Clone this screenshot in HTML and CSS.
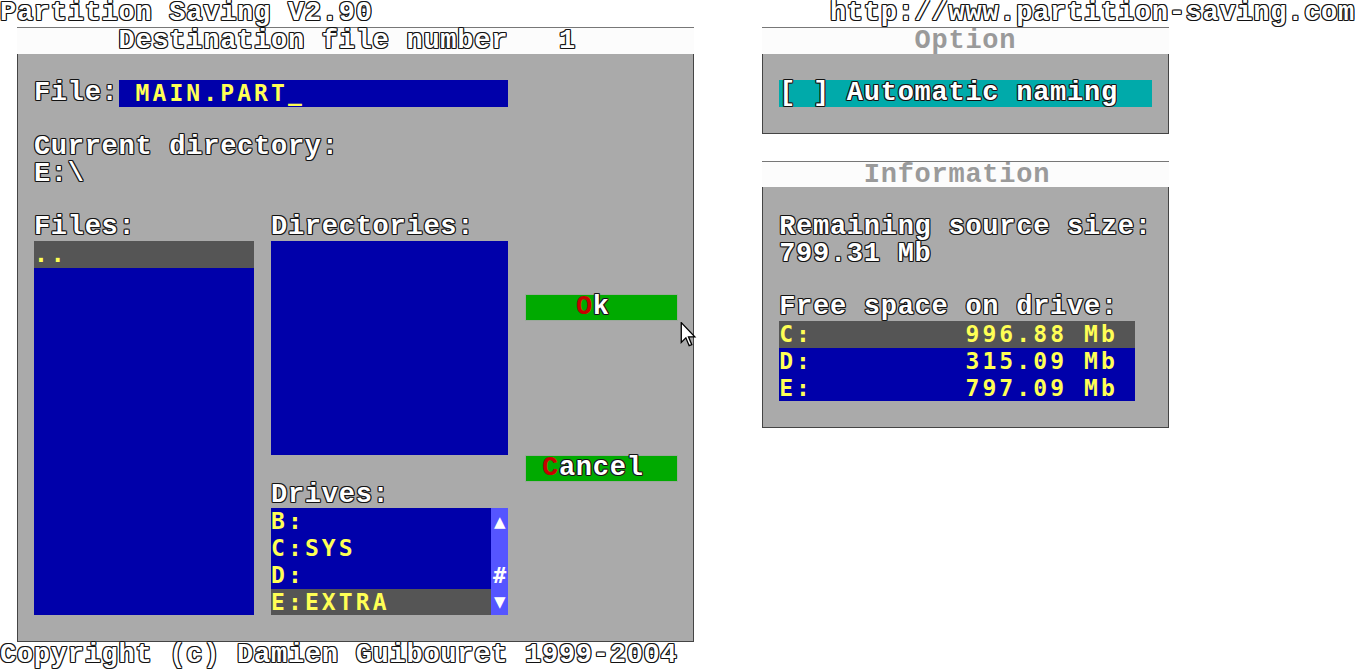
FILE: index.html
```html
<!DOCTYPE html>
<html>
<head>
<meta charset="utf-8">
<title>Partition Saving</title>
<link rel="stylesheet" href="styles.css">
</head>
<body>
<div class="screen">
  <div class="hdr-left t-out">Partition Saving V2.90</div>
  <div class="hdr-right t-out">http://www.partition-saving.com</div>

  <section class="win dialog">
    <div class="title t-out">Destination file number   1</div>
    <div class="file-lbl t-out">File:</div>
    <div class="input t-yel">MAIN.PART_</div>
    <div class="cur-lbl t-out">Current directory:</div>
    <div class="cur-val t-out">E:\</div>
    <div class="files-lbl t-out">Files:</div>
    <div class="dirs-lbl t-out">Directories:</div>
    <div class="list files">
      <div class="item sel t-yel">..</div>
    </div>
    <div class="list dirs"></div>
    <div class="drives-lbl t-out">Drives:</div>
    <div class="drives">
      <div class="drive-items">
        <div class="item t-yel">B:</div>
        <div class="item t-yel">C:SYS</div>
        <div class="item t-yel">D:</div>
        <div class="item sel t-yel">E:EXTRA</div>
      </div>
      <div class="scroll">
        <div class="sc-cell arrow">▲</div>
        <div class="sc-cell"></div>
        <div class="sc-cell hash">#</div>
        <div class="sc-cell arrow">▼</div>
      </div>
    </div>
    <div class="btn ok t-out">   <span class="hot">O</span>k</div>
    <div class="btn cancel t-out"> <span class="hot">C</span>ancel</div>
  </section>

  <section class="win option">
    <div class="title inactive">         Option</div>
    <div class="check t-out">[ ] Automatic naming</div>
  </section>

  <section class="win info">
    <div class="title inactive">      Information</div>
    <div class="rem-lbl t-out">Remaining source size:</div>
    <div class="rem-val t-out">799.31 Mb</div>
    <div class="free-lbl t-out">Free space on drive:</div>
    <div class="free-list">
      <div class="item sel t-yel">C:         996.88 Mb </div>
      <div class="item t-yel">D:         315.09 Mb </div>
      <div class="item t-yel">E:         797.09 Mb </div>
    </div>
  </section>

  <div class="footer t-out">Copyright (c) Damien Guibouret 1999-2004</div>

  <svg class="cursor" width="17" height="25" viewBox="0 0 12 19">
    <path d="M0.5 0.5 L0.5 15.5 L4 12 L6.5 18 L8.5 17.2 L6 11.3 L10.8 11.3 Z" fill="#fff" stroke="#000" stroke-width="1" stroke-linejoin="miter"/>
  </svg>
</div>
</body>
</html>
```

FILE: styles.css
```css
:root {
  --cw: 16.9375px;
  --ch: 26.76px;
  --gray: #aaaaaa;
  --blue: #0000aa;
  --dark: #555555;
  --yellow: #ffff55;
}

* { box-sizing: border-box; }

html, body {
  margin: 0;
  padding: 0;
  background: #ffffff;
}

.screen {
  position: relative;
  width: 1355px;
  height: 669px;
  display: grid;
  grid-template-columns: repeat(80, var(--cw));
  grid-template-rows: repeat(25, var(--ch));
  background: #ffffff;
  overflow: hidden;
}

/* text styles */
.t-out, .title {
  font-family: "Liberation Mono", "Courier New", monospace;
  font-weight: bold;
  font-size: 27px;
  letter-spacing: calc(var(--cw) - 16.203px);
  line-height: var(--ch);
  color: #ffffff;
  white-space: pre;
  text-shadow: 1px 0 #111, -1px 0 #111, 0 1px #111, 0 -1px #111,
               1px 1px #333, -1px -1px #333, 1px -1px #333, -1px 1px #333;
}

.t-yel {
  font-family: "DejaVu Sans Mono", monospace;
  font-weight: bold;
  font-size: 23px;
  letter-spacing: calc(var(--cw) - 13.847px);
  line-height: var(--ch);
  color: var(--yellow);
  white-space: pre;
}

/* header / footer */
.hdr-left { grid-column: 1 / 23; grid-row: 1; }
.hdr-right { grid-column: 50 / 81; grid-row: 1; }
.footer { grid-column: 1 / 41; grid-row: 25; }

/* windows */
.win {
  display: grid;
  grid-template-columns: repeat(var(--cols), var(--cw));
  grid-template-rows: repeat(var(--rows), var(--ch));
  background: var(--gray);
  box-shadow: inset 1px 0 #444, inset -1px 0 #444, inset 0 -1px #444;
}

.title {
  grid-column: 1 / -1;
  grid-row: 1;
  background: #fcfcfc;
  border-top: 1px solid #777;
}

.title.inactive {
  color: #9a9a9a;
  text-shadow: none;
}

.dialog {
  --cols: 40;
  --rows: 23;
  grid-column: 2 / 42;
  grid-row: 2 / 25;
}

.dialog .title { padding-left: calc(6 * var(--cw)); }

.file-lbl { grid-column: 2 / 7; grid-row: 3; }
.input {
  grid-column: 7 / 30;
  grid-row: 3;
  background: var(--blue);
  padding-left: var(--cw);
}
.cur-lbl { grid-column: 2 / 22; grid-row: 5; }
.cur-val { grid-column: 2 / 8; grid-row: 6; }
.files-lbl { grid-column: 2 / 10; grid-row: 8; }
.dirs-lbl { grid-column: 16 / 30; grid-row: 8; }

.list {
  background: var(--blue);
  display: flex;
  flex-direction: column;
}
.files { grid-column: 2 / 15; grid-row: 9 / 23; }
.dirs { grid-column: 16 / 30; grid-row: 9 / 17; }

.item {
  height: var(--ch);
  flex: none;
}
.item.sel { background: var(--dark); }

.drives-lbl { grid-column: 16 / 25; grid-row: 18; }
.drives {
  grid-column: 16 / 30;
  grid-row: 19 / 23;
  display: flex;
  background: var(--blue);
}
.drive-items {
  flex: 1;
  display: flex;
  flex-direction: column;
}
.scroll {
  width: var(--cw);
  flex: none;
  background: #5555ff;
  display: flex;
  flex-direction: column;
}
.sc-cell {
  height: var(--ch);
  display: flex;
  align-items: center;
  justify-content: center;
  color: #ffffff;
  font-family: "DejaVu Sans", sans-serif;
}
.sc-cell.arrow { font-size: 15px; }
.sc-cell.hash {
  font-family: "DejaVu Sans Mono", monospace;
  font-weight: bold;
  font-size: 22px;
}

.btn {
  background: #00aa00;
  box-shadow: inset 0 0 0 1px #9aa89a;
}
.btn .hot {
  color: #c80000;
  text-shadow: none;
}
.ok { grid-column: 31 / 40; grid-row: 11; }
.cancel { grid-column: 31 / 40; grid-row: 17; }

.option {
  --cols: 24;
  --rows: 4;
  grid-column: 46 / 70;
  grid-row: 2 / 6;
}
.check {
  grid-column: 2 / 24;
  grid-row: 3;
  background: #00aaaa;
}

.info {
  --cols: 24;
  --rows: 10;
  grid-column: 46 / 70;
  grid-row: 7 / 17;
}
.rem-lbl { grid-column: 2 / 24; grid-row: 3; }
.rem-val { grid-column: 2 / 12; grid-row: 4; }
.free-lbl { grid-column: 2 / 23; grid-row: 6; }
.free-list {
  grid-column: 2 / 23;
  grid-row: 7 / 10;
  background: var(--blue);
  display: flex;
  flex-direction: column;
}

.cursor {
  position: absolute;
  left: 680px;
  top: 322px;
}
```
